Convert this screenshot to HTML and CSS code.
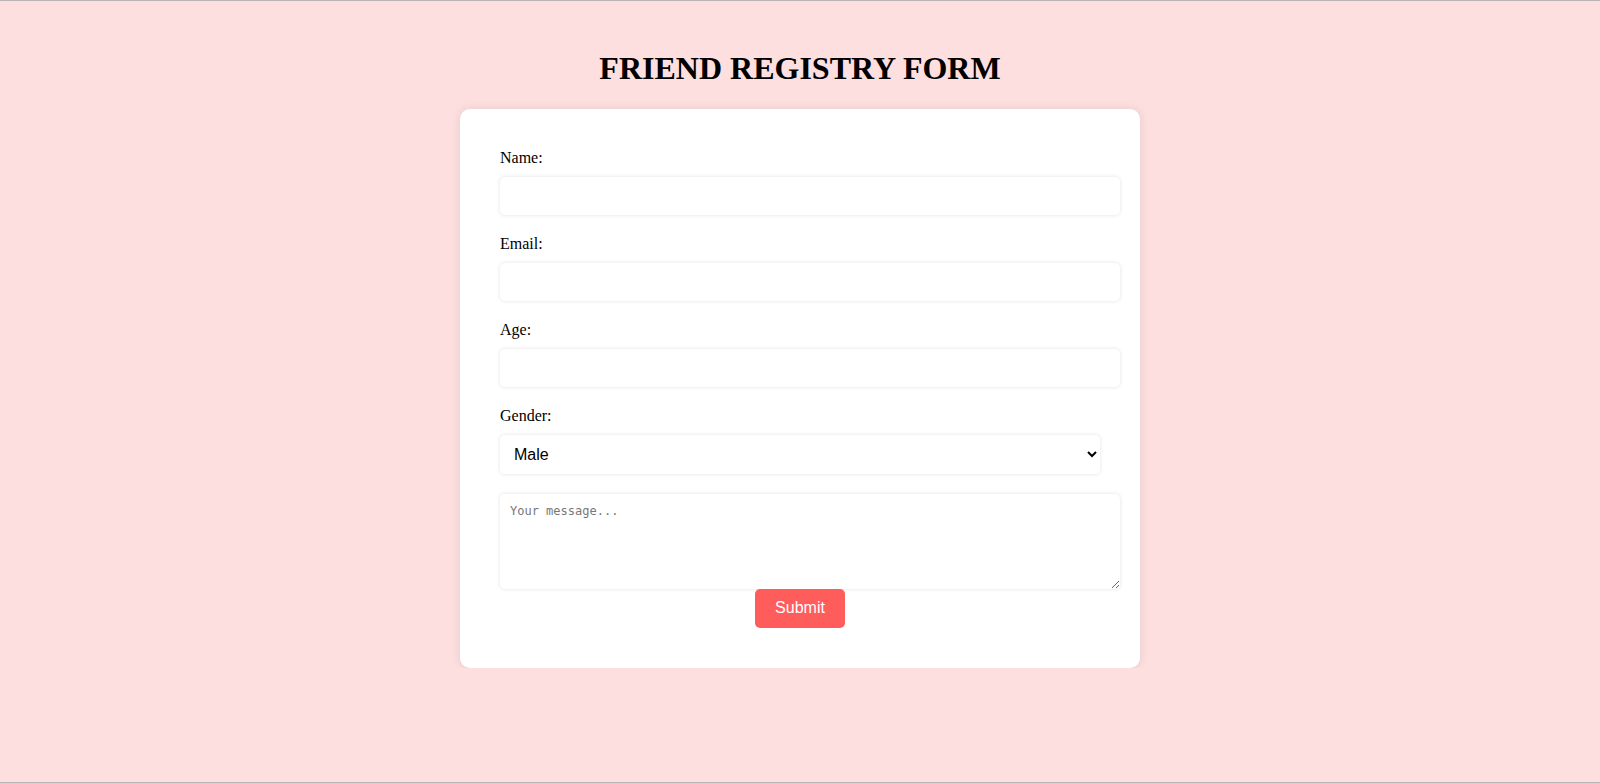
FILE: index.html
```html
<!DOCTYPE html>
<html lang="en">
<head>
<meta charset="utf-8">
<title>Friend Registry Form</title>
<link rel="stylesheet" href="styles.css">
</head>
<body>
  <h1 class="title">FRIEND REGISTRY FORM</h1>
  <div class="card">
    <form class="form">
      <label class="label" for="name">Name:</label>
      <input class="field" type="text" id="name">
      <label class="label" for="email">Email:</label>
      <input class="field" type="email" id="email">
      <label class="label" for="age">Age:</label>
      <input class="field" type="number" id="age">
      <label class="label" for="gender">Gender:</label>
      <select class="select" id="gender">
        <option>Male</option>
        <option>Female</option>
        <option>Other</option>
      </select>
      <textarea class="message" placeholder="Your message..."></textarea>
      <button class="submit" type="submit">Submit</button>
    </form>
  </div>
</body>
</html>
```

FILE: styles.css
```css
html {
  background: #fddfdf;
  border-top: 1px solid #b9b3b3;
  border-bottom: 1px solid #b9b3b3;
  min-height: 100vh;
  box-sizing: border-box;
}

body {
  margin: 0;
  padding: 28px 0 0;
  font-family: "Liberation Serif", "Times New Roman", serif;
  font-size: 16px;
  color: #000;
}

.title {
  font-size: 32px;
  font-weight: bold;
  text-align: center;
  margin: 21.44px 0;
}

.card {
  width: 600px;
  margin: 0 auto;
  padding: 40px;
  background: #fff;
  border-radius: 10px;
  box-shadow: 0 0 10px rgba(0, 0, 0, 0.1);
}

.form {
  display: block;
}

.label {
  display: block;
  margin-bottom: 10px;
  line-height: 17px;
  padding-bottom: 1px;
}

.field {
  display: block;
  width: 100%;
  height: 18px;
  padding: 10px;
  margin: 0 0 20px;
  border: none;
  border-radius: 5px;
  box-shadow: 0 0 4px rgba(0, 0, 0, 0.12);
  font-family: "Liberation Sans", Arial, sans-serif;
  font-size: 16px;
  outline: none;
}

.select {
  display: block;
  width: 100%;
  height: 39px;
  padding: 0 10px;
  margin: 0 0 20px;
  border: none;
  border-radius: 5px;
  box-shadow: 0 0 4px rgba(0, 0, 0, 0.12);
  background: #fff;
  color: #000;
  font-family: "Liberation Sans", Arial, sans-serif;
  font-size: 16px;
}

.message {
  display: block;
  width: 100%;
  height: 75px;
  padding: 10px;
  margin: 0;
  border: none;
  border-radius: 5px;
  box-shadow: 0 0 4px rgba(0, 0, 0, 0.12);
  font-family: "DejaVu Sans Mono", "Liberation Mono", monospace;
  font-size: 12px;
  resize: vertical;
  outline: none;
}

.message::placeholder {
  color: #777;
}

.submit {
  display: block;
  margin: 0 auto;
  padding: 0 20px;
  height: 39px;
  border: none;
  border-radius: 5px;
  background: #ff5c5c;
  color: #fff;
  font-family: "Liberation Sans", Arial, sans-serif;
  font-size: 16px;
  cursor: pointer;
}
```
